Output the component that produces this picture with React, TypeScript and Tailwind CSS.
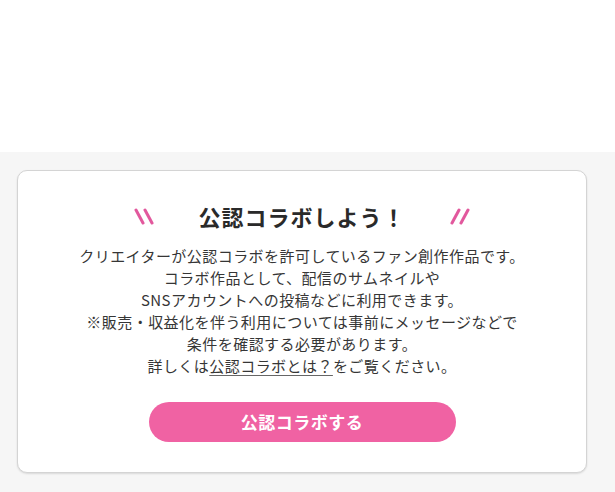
import React from 'react'

function Slashes({ dir }: { dir: 'left' | 'right' }) {
    const lines = dir === 'left'
        ? [[2, 2, 9, 15], [11, 2, 18, 15]]
        : [[9, 2, 2, 15], [18, 2, 11, 15]]
    return (
        <svg width="20" height="17" viewBox="0 0 20 17" className="shrink-0">
            {lines.map(([x1, y1, x2, y2], i) => (
                <line key={i} x1={x1} y1={y1} x2={x2} y2={y2} stroke="#e2589d" strokeWidth="3" strokeLinecap="round" />
            ))}
        </svg>
    )
}

export default function App() {
    return (
        <div className="w-[615px] h-[492px] bg-white font-['Noto_Sans_CJK_JP',sans-serif] text-[#333]">
            <div className="h-[152px] bg-white" />

            <section className="bg-[#f6f6f6] pl-[17px] pr-[28px] pt-[18px] pb-[30px]">
                <div className="bg-white border border-[#d4d4d4] rounded-[10px] shadow-[0_1px_2px_rgba(0,0,0,0.12)] pt-[30px] pb-[30px] flex flex-col items-center">
                    <div className="flex items-center gap-[44px]">
                        <Slashes dir="left" />
                        <h2 className="text-[22px] leading-[30px] font-bold tracking-[1px] text-[#2a2a2a]">公認コラボしよう！</h2>
                        <Slashes dir="right" />
                    </div>

                    <p className="mt-[14px] text-[15px] leading-[22px] tracking-[0.45px] text-center text-[#363636]">
                        クリエイターが公認コラボを許可しているファン創作作品です。<br />
                        コラボ作品として、配信のサムネイルや<br />
                        SNSアカウントへの投稿などに利用できます。<br />
                        ※販売・収益化を伴う利用については事前にメッセージなどで<br />
                        条件を確認する必要があります。<br />
                        詳しくは<a href="#" className="underline underline-offset-[3px] decoration-[#666]">公認コラボとは？</a>をご覧ください。
                    </p>

                    <button className="mt-[25px] w-[307px] h-[40px] rounded-full bg-[#f062a3] text-white text-[17px] font-bold tracking-[0.5px]">
                        公認コラボする
                    </button>
                </div>
            </section>
        </div>
    )
}
